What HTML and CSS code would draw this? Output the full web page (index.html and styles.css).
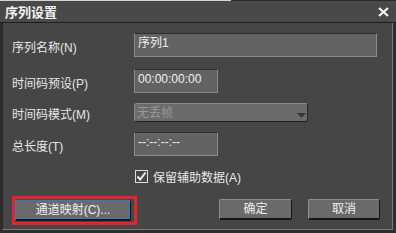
FILE: index.html
```html
<!DOCTYPE html>
<html lang="zh">
<head>
<meta charset="utf-8">
<title>序列设置</title>
<link rel="stylesheet" href="styles.css">
</head>
<body>
<div class="frame">
  <div class="titlebar">
    <span class="title">序列设置</span>
    <svg class="close" width="11" height="10" viewBox="0 0 11 10"><path d="M1 1 L10 9 M10 1 L1 9" stroke="#f4f4f4" stroke-width="2.2" fill="none"/></svg>
  </div>
  <div class="panel">
    <div class="row">
      <span class="lbl">序列名称(N)</span>
      <div class="field w-name">序列1</div>
    </div>
    <div class="row r2">
      <span class="lbl">时间码预设(P)</span>
      <div class="field w-short">00:00:00:00</div>
    </div>
    <div class="row r3">
      <span class="lbl">时间码模式(M)</span>
      <div class="select"><span>无丢帧</span><svg class="arrow" width="9" height="5" viewBox="0 0 9 5"><path d="M0 0 H9 L4.5 5 Z" fill="#363636"/></svg></div>
    </div>
    <div class="row r4">
      <span class="lbl">总长度(T)</span>
      <div class="field w-short">--:--:--:--</div>
    </div>
    <div class="row r5">
      <span class="spacer"></span>
      <span class="check"><svg width="11" height="11" viewBox="0 0 11 11"><path d="M1.5 5.5 L4.2 8.5 L9.5 1.5" stroke="#f2f2f2" stroke-width="2" fill="none"/></svg></span>
      <span class="check-label">保留辅助数据(A)</span>
    </div>
    <div class="row r6">
      <div class="hl"><div class="btn focus">通道映射(C)...</div></div>
      <div class="btn ok">确定</div>
      <div class="btn cancel">取消</div>
    </div>
  </div>
</div>
</body>
</html>
```
FILE: styles.css
```css
* { box-sizing: border-box; }
body {
  margin: 0;
  background: #2f2f2f;
  font-family: "Liberation Sans", "Noto Sans CJK SC", sans-serif;
  font-size: 12px;
  color: #e8e8e8;
}
.frame {
  width: 396px;
  height: 233px;
  display: flex;
  flex-direction: column;
  padding-top: 1px;
  background: linear-gradient(to right, #d4d4d4 231px, #2b2b2b 231px) top left / 100% 1px no-repeat, #2f2f2f;
}
.titlebar {
  height: 22px;
  flex: none;
  background: #494949;
  border-bottom: 1px solid #1e1e1e;
  display: flex;
  align-items: center;
  justify-content: space-between;
  padding: 0 7px 0 5px;
}
.title {
  font-family: "Noto Sans CJK SC", sans-serif;
  font-size: 13px;
  font-weight: bold;
  color: #f2f2f2;
  line-height: 1;
}
.close { display: block; }
.panel {
  flex: 1;
  margin: 0 3px 3px 2px;
  background: #464646;
  border-left: 1px solid #262626;
  border-right: 1px solid #7a7a7a;
  border-bottom: 1px solid #7a7a7a;
  padding: 10px 0 0 9px;
  display: flex;
  flex-direction: column;
}
.row {
  display: flex;
  align-items: center;
}
.r2 { margin-top: 12px; }
.r3 { margin-top: 10px; }
.r4 { margin-top: 10px; }
.r5 { margin-top: 12px; }
.r6 { margin-top: 11px; align-items: flex-start; }
.lbl {
  width: 122px;
  flex: none;
  color: #e6e6e6;
  padding-top: 2px;
}
.field {
  height: 24px;
  background: #636363;
  border: 1px solid #8a8a8a;
  border-top-color: #2c2c2c;
  padding: 2px 3px;
  line-height: 15px;
  color: #f0f0f0;
}
.w-name { width: 243px; }
.w-short { width: 84px; }
.select {
  width: 174px;
  height: 19px;
  border-radius: 3px;
  background: #6b6b6b;
  border: 1px solid #8a8a8a;
  border-bottom-color: #1e1e1e;
  border-right-color: #2a2a2a;
  display: flex;
  justify-content: space-between;
  align-items: center;
  padding: 1px 1px 0 2px;
  color: #989898;
  line-height: 15px;
}
.arrow {
  display: block;
  align-self: flex-end;
  margin-bottom: 3px;
}
.spacer { width: 123px; flex: none; }
.check {
  width: 13px;
  height: 13px;
  border: 1px solid #dcdcdc;
  display: flex;
  align-items: center;
  justify-content: center;
}
.check svg { display: block; }
.check-label {
  margin-left: 5px;
  color: #e8e8e8;
}
.hl {
  width: 125px;
  height: 29px;
  border: 3px solid #e0282c;
  padding: 1px 3px 1px 0;
}
.btn {
  height: 21px;
  background: #6a6a6a;
  border: 1px solid;
  border-color: #8e8e8e #161616 #161616 #8e8e8e;
  border-bottom-width: 2px;
  border-radius: 2px;
  color: #f0f0f0;
  display: flex;
  align-items: center;
  justify-content: center;
  line-height: 1;
}
.btn.focus {
  width: 116px;
  border-color: #3b78c4 #161616 #161616 #3b78c4;
  box-shadow: inset -1px 0 0 #3b78c4, inset 0 -1px 0 #3b78c4;
}
.ok {
  width: 73px;
  margin-left: 82px;
  margin-top: 3px;
}
.cancel {
  width: 72px;
  margin-left: 16px;
  margin-top: 3px;
}
```
